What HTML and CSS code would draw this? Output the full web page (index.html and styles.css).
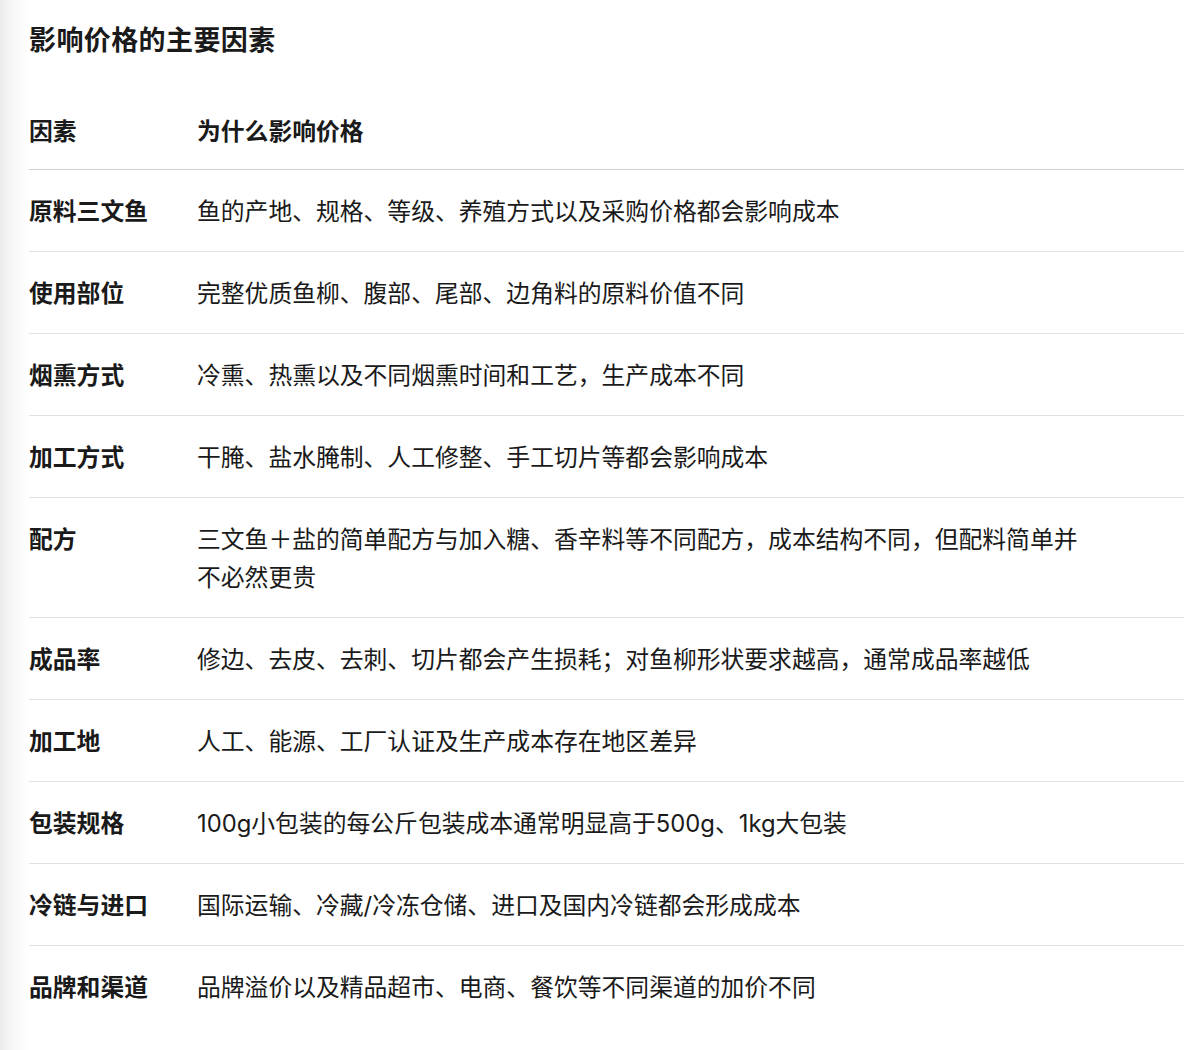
FILE: index.html
```html
<!DOCTYPE html>
<html lang="zh-CN">
<head>
<meta charset="utf-8">
<title>影响价格的主要因素</title>
<link rel="stylesheet" href="styles.css">
</head>
<body>
<main class="page">
  <h2 class="title">影响价格的主要因素</h2>
  <table class="factors">
    <thead>
      <tr><th class="col-factor">因素</th><th class="col-reason">为什么影响价格</th></tr>
    </thead>
    <tbody>
      <tr><td class="col-factor">原料三文鱼</td><td class="col-reason">鱼的产地、规格、等级、养殖方式以及采购价格都会影响成本</td></tr>
      <tr><td class="col-factor">使用部位</td><td class="col-reason">完整优质鱼柳、腹部、尾部、边角料的原料价值不同</td></tr>
      <tr><td class="col-factor">烟熏方式</td><td class="col-reason">冷熏、热熏以及不同烟熏时间和工艺，生产成本不同</td></tr>
      <tr><td class="col-factor">加工方式</td><td class="col-reason">干腌、盐水腌制、人工修整、手工切片等都会影响成本</td></tr>
      <tr><td class="col-factor">配方</td><td class="col-reason">三文鱼＋盐的简单配方与加入糖、香辛料等不同配方，成本结构不同，但配料简单并不必然更贵</td></tr>
      <tr><td class="col-factor">成品率</td><td class="col-reason">修边、去皮、去刺、切片都会产生损耗；对鱼柳形状要求越高，通常成品率越低</td></tr>
      <tr><td class="col-factor">加工地</td><td class="col-reason">人工、能源、工厂认证及生产成本存在地区差异</td></tr>
      <tr><td class="col-factor">包装规格</td><td class="col-reason">100g小包装的每公斤包装成本通常明显高于500g、1kg大包装</td></tr>
      <tr><td class="col-factor">冷链与进口</td><td class="col-reason">国际运输、冷藏/冷冻仓储、进口及国内冷链都会形成成本</td></tr>
      <tr><td class="col-factor">品牌和渠道</td><td class="col-reason">品牌溢价以及精品超市、电商、餐饮等不同渠道的加价不同</td></tr>
    </tbody>
  </table>
</main>
</body>
</html>
```

FILE: styles.css
```css
html, body {
  margin: 0;
  padding: 0;
}
body {
  background: linear-gradient(to right, #ebebeb 0px, #f7f7f7 12px, #ffffff 28px);
  color: #1a1a1a;
  font-family: "Inter", "Noto Sans CJK SC", "Noto Sans", sans-serif;
  overflow: hidden;
}
.page {
  padding: 21px 0 0 29px;
}
.title {
  margin: 0;
  font-size: 27px;
  line-height: 40px;
  font-weight: 700;
  letter-spacing: 0.4px;
}
.factors {
  margin-top: 29px;
  width: 1155px;
  border-collapse: collapse;
  table-layout: fixed;
  font-size: 23.8px;
  line-height: 38px;
}
.factors th,
.factors td {
  text-align: left;
  vertical-align: top;
  padding: 23px 0 20px 0;
}
.factors th {
  font-weight: 700;
  padding-top: 23px;
  padding-bottom: 18px;
}
.factors thead tr {
  border-bottom: 1.5px solid #cfcfcf;
}
.factors tbody tr {
  border-bottom: 1px solid #e2e2e2;
}
.factors tbody tr:last-child {
  border-bottom: none;
}
.col-factor {
  width: 168px;
}
.factors td.col-factor {
  font-weight: 700;
}
.factors .col-reason {
  padding-right: 87px;
}
```
